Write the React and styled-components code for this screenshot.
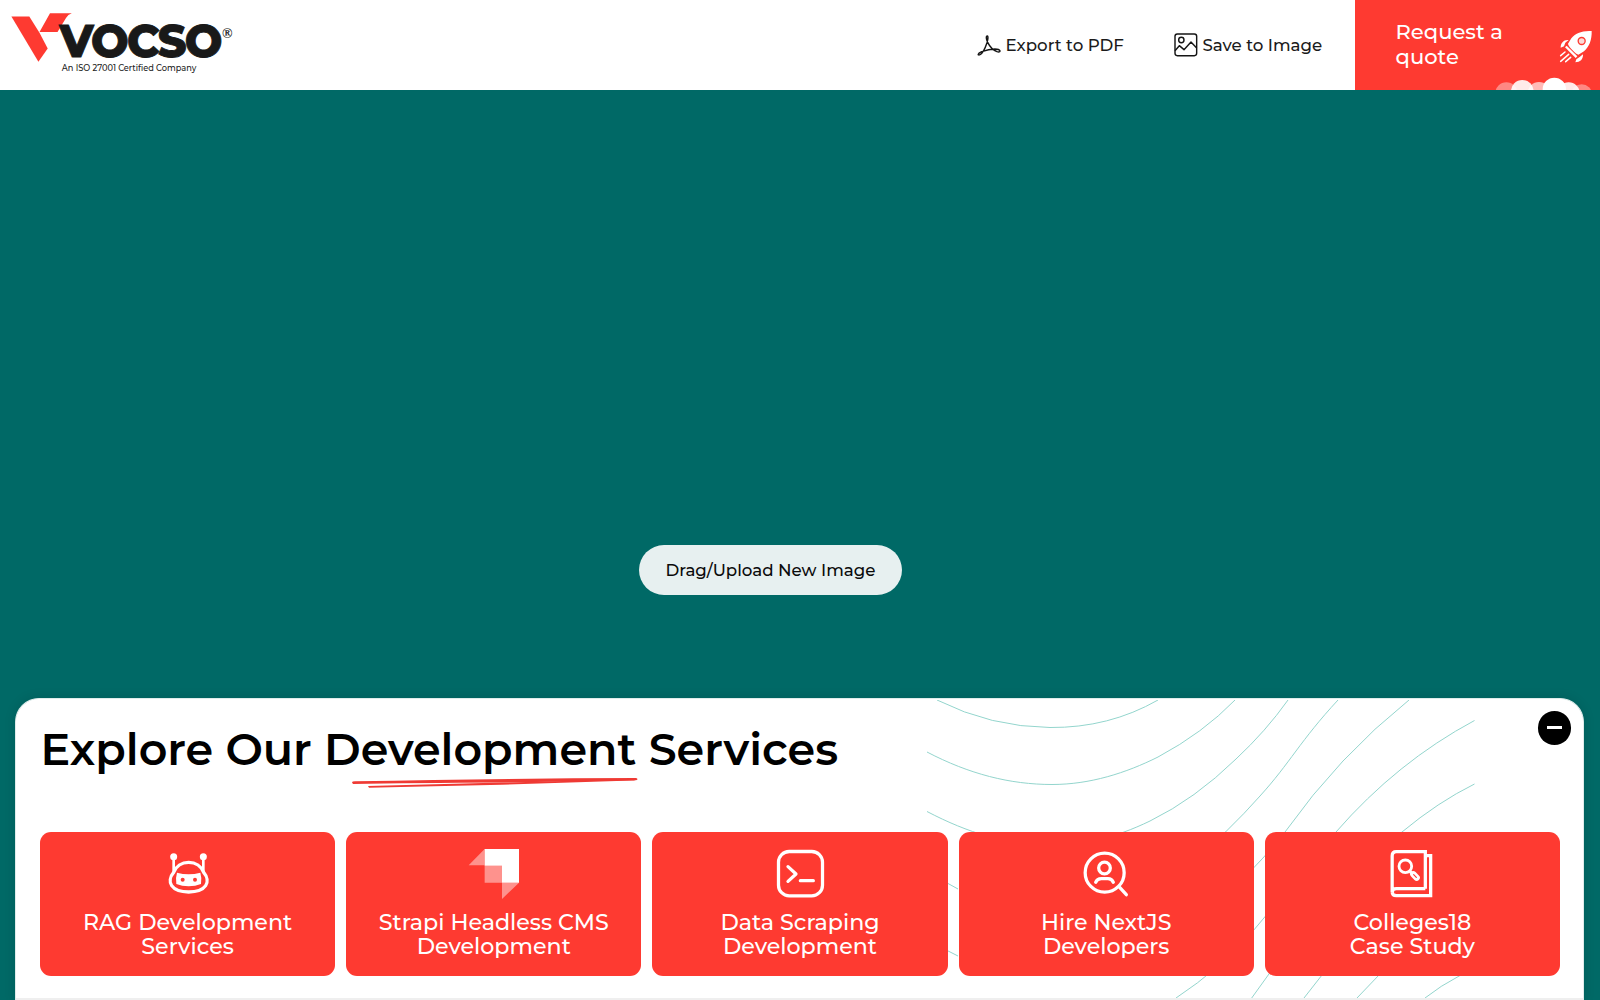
import React from 'react';
import styled, { createGlobalStyle } from 'styled-components';

const RED = '#fe3a31';
const TEAL = '#006966';

const GlobalStyle = createGlobalStyle`
  * { box-sizing: border-box; }
  body {
    margin: 0;
    overflow: hidden;
    background: ${TEAL};
    font-family: Montserrat, Inter, "Liberation Sans", sans-serif;
  }
`;

const Page = styled.div`
  width: 1600px;
  height: 1000px;
  overflow: hidden;
  display: flex;
  flex-direction: column;
  background: ${TEAL};
`;

const Header = styled.header`
  height: 90px;
  flex: none;
  display: flex;
  align-items: stretch;
  background: #fff;
`;

const Logo = styled.svg`
  width: 250px;
  height: 90px;
  display: block;
`;

const Actions = styled.nav`
  margin-left: auto;
  margin-right: 33px;
  display: flex;
  align-items: center;
  gap: 50px;
`;

const Action = styled.a`
  display: flex;
  align-items: center;
  gap: 4.5px;
  font-size: 16.65px;
  font-weight: 500;
  white-space: nowrap;
  color: #1b1b1b;
`;

const ActionIcon = styled.svg`
  width: 24px;
  height: 24px;
  fill: none;
  stroke: #151515;
  stroke-width: 4.3;
  stroke-linejoin: round;
`;

const Quote = styled.a`
  position: relative;
  width: 244.8px;
  padding: 0 0 1.4px 40.3px;
  display: flex;
  flex-direction: column;
  justify-content: center;
  background: ${RED};
  color: #fff;
  font-size: 21.1px;
  font-weight: 500;
  line-height: 25.6px;
`;

const QuoteArt = styled.svg`
  position: absolute;
  right: 0;
  bottom: 0;
  width: 110px;
  height: 70px;
`;

const Line = styled.span`
  display: block;
  white-space: nowrap;
`;

const Stage = styled.main`
  flex: 1;
  display: flex;
  align-items: flex-end;
  justify-content: center;
  padding: 0 59px 102.6px 0;
`;

const UploadButton = styled.button`
  width: 263px;
  height: 50.2px;
  padding: 0;
  border: 0;
  border-radius: 26px;
  background: #e7f0f0;
  color: #0b0b0b;
  font: 500 16.65px Montserrat, Inter, "Liberation Sans", sans-serif;
`;

const Panel = styled.section`
  position: relative;
  flex: none;
  height: 302px;
  margin: 0 16px 0 15px;
  padding: 25px 23px 0 24px;
  border: 1px solid #dfeceb;
  border-bottom: 0;
  border-radius: 24px 24px 0 0;
  background: #fff;
  box-shadow: 0 0 12px rgba(0, 0, 0, 0.12);
  display: flex;
  flex-direction: column;
  overflow: hidden;
`;

const Waves = styled.svg`
  position: absolute;
  left: 911px;
  top: 1px;
  width: 548px;
  height: 299px;
  fill: none;
  stroke: #93d5cd;
  stroke-width: 1;
`;

const Title = styled.h1`
  position: relative;
  margin: 0 0 0 0.5px;
  height: 50px;
  font-size: 44.45px;
  font-weight: 600;
  line-height: 50px;
  color: #000;
  white-space: nowrap;
`;

const Underlined = styled.span`
  position: relative;
  display: inline-block;
`;

const Scribble = styled.svg`
  position: absolute;
  left: 27.5px;
  bottom: -14px;
  width: 286px;
  height: 10px;
  overflow: visible;
  fill: #ef3a34;
`;

const Collapse = styled.button`
  position: absolute;
  top: 12px;
  right: 12px;
  width: 33.5px;
  height: 33.5px;
  padding: 0;
  border: 0;
  border-radius: 50%;
  background: #000;
  display: flex;
  align-items: center;
  justify-content: center;
`;

const Dash = styled.span`
  width: 15.5px;
  height: 2.6px;
  background: #fff;
`;

const Cards = styled.div`
  position: relative;
  margin-top: 58.3px;
  display: grid;
  grid-template-columns: repeat(5, 1fr);
  gap: 11px;
`;

const Card = styled.a`
  height: 143.3px;
  padding-top: 12.7px;
  display: flex;
  flex-direction: column;
  align-items: center;
  border-radius: 11px;
  background: ${RED};
  color: #fff;
`;

const CardIcon = styled.svg`
  width: 60px;
  height: 55px;
  margin-bottom: 10.8px;
  fill: none;
  stroke: #fff;
  stroke-width: 9.8;
`;

const CardLine = styled(Line)`
  font-size: 22.2px;
  font-weight: 500;
  line-height: 24.6px;
`;

const Strip = styled.div`
  position: absolute;
  left: 0;
  right: 0;
  bottom: 0;
  height: 2px;
  background: #efefef;
`;

const icons = {
  robot: (
    <g transform="translate(7 0)">
      <g fill="#fff" stroke="none">
        <circle cx="40" cy="35" r="10.500" />
        <circle cx="129" cy="35" r="10.500" />
        <path d="M50 83Q85 92 120 83Q125 99 122 117Q105 124 85 124Q65 124 48 117Q45 99 50 83Z" />
      </g>
      <path d="M40 40V80M129 40V80" strokeWidth="8" />
      <path d="M85 52C64 52 47 64 40 82C28 96 27 112 34 122C43 135 64 141 85 141S127 135 136 122C143 112 142 96 130 82C123 64 106 52 85 52Z" />
      <circle cx="67" cy="104" r="6" fill={RED} stroke="none" />
      <circle cx="104" cy="104" r="6" fill={RED} stroke="none" />
    </g>
  ),
  strapi: (
    <g fill="#fff" stroke="none">
      <path d="M62 12H165V113H114V62H62Z" />
      <path d="M62 12V61H14ZM62 62H114V113H62ZM114 113H165L114 162Z" opacity="0.45" />
    </g>
  ),
  terminal: (
    <g strokeLinecap="round" strokeLinejoin="round">
      <rect x="25.500" y="19.500" width="132" height="133" rx="32" />
      <path d="M54 65L78 87L54 109M91 107H130" />
    </g>
  ),
  hire: (
    <g strokeLinecap="round">
      <circle cx="86" cy="83" r="58.500" />
      <circle cx="85.500" cy="69" r="17.500" />
      <path d="M59 112Q63 101 76 101H96Q108 101 112 112" />
      <path d="M131 127L151 149" />
    </g>
  ),
  book: (
    <g transform="translate(-7 0)">
      <path d="M137 131V20H50Q37.500 20 37.500 33V140Q37.500 152 50 152H153V32H138M37.500 142Q38 131 50 131H137" />
      <circle cx="77" cy="64" r="19" strokeWidth="8.500" />
      <path d="M91 79L97 85" />
      <path d="M101 88L111 98" strokeWidth="19" strokeLinecap="round" />
      <path d="M102 89L110 97" stroke={RED} strokeWidth="3.500" strokeLinecap="round" />
    </g>
  ),
};

const services = [
  { icon: 'robot', lines: ['RAG Development', 'Services'] },
  { icon: 'strapi', lines: ['Strapi Headless CMS', 'Development'] },
  { icon: 'terminal', lines: ['Data Scraping', 'Development'] },
  { icon: 'hire', lines: ['Hire NextJS', 'Developers'] },
  { icon: 'book', lines: ['Colleges18', 'Case Study'] },
];

const waves = [
  'M937 700Q991 727 1050 727.500T1158 700',
  'M927 752C969 774 1010 784.500 1052 784.500C1090 784.500 1126 773 1158 757Q1203 733 1235 700',
  'M927 811.500C1010 855 1080 855 1150 821Q1195 799 1236 759Q1266 731 1288 700',
  'M927 870Q940 880 958 889',
  'M927 938Q940 948 958 956',
  'M1176 998Q1220 969 1253 931Q1300 875 1336 832Q1397 762 1474.500 720.500',
  'M1180 874Q1231 829 1260 796C1290 763 1300 741 1338 700',
  'M1190 925Q1229 897 1253 868.500Q1272 849 1285 832Q1339 756 1409 700',
  'M1251.700 998Q1330 886 1402 832Q1438 802 1474.500 784',
  'M1304 998L1322 975Q1350 940 1380 910',
  'M1357 998L1379 975Q1410 945 1440 925',
  'M1425 998Q1440 986 1460 975.500',
];

export default function App() {
  return (
    <Page>
      <GlobalStyle />
      <Header>
        <Logo viewBox="0 0 250 90" role="img" aria-label="VOCSO">
          <path d="M11.400 16.500H29.300L39.500 32.700L47.700 48.500L38.400 61.800Z" fill={RED} />
          <path d="M50 13.300H71.800Q68 14.500 66 18L57.500 32H39.500Z" fill={RED} />
          <text x="59.500" y="56.700" fontSize="44.500" fontWeight="800" fill="#191919" stroke="#191919" strokeWidth="0.900" textLength="163" lengthAdjust="spacing">VOCSO</text>
          <text x="222" y="38" fontSize="14" fontWeight="700" fontFamily="Liberation Serif, serif" fill="#191919">®</text>
          <text x="61.800" y="70.700" fontSize="8.600" fontWeight="500" fill="#222" textLength="134.500" lengthAdjust="spacingAndGlyphs">An ISO 27001 Certified Company</text>
        </Logo>
        <Actions>
          <Action>
            <ActionIcon viewBox="18 15 72 72">
              <path d="M49 24C44 24 46 35 50 43C56 55 66 66 78 71C90 75 90 65 78 63.500C60 62 46 66 32 71C18 77 20 83 27 80C36 75 44 56 48 44C51 34 52 24 49 24Z" />
            </ActionIcon>
            Export to PDF
          </Action>
          <Action>
            <ActionIcon viewBox="0 0 72 72">
              <rect x="3" y="3" width="65" height="65" rx="7" />
              <circle cx="22" cy="21" r="8" />
              <path d="M3 53L16 38L30 50L51 27L68 45" />
            </ActionIcon>
            Save to Image
          </Action>
        </Actions>
        <Quote>
          <Line>Request a</Line>
          <Line>quote</Line>
          <QuoteArt viewBox="0 0 330 210">
            <g fill="#fff">
              <path d="M305 33C276 31 256 40 244 55L234 71Q234 76 247 90T265 104L282 94C297 81 306 60 305 33Z" />
              <path d="M230 77L262 109L257 114L225 82Z" />
              <path d="M236 60C222 58 212 68 212 83L222 79L226 68Z" />
              <path d="M279 103C280 118 270 127 256 127L259 118L269 111Z" />
            </g>
            <circle cx="275" cy="63" r="10.500" fill="#fbd9d6" stroke={RED} strokeWidth="4" />
            <path d="M212 107L225 96M212 124L236 103M227 125L242 112" stroke="#fff" strokeWidth="4.500" strokeLinecap="round" />
            <g fill="#fff">
              <circle cx="49" cy="220" r="33" opacity="0.4" />
              <circle cx="147" cy="220" r="34" opacity="0.65" />
              <circle cx="275" cy="224" r="31" opacity="0.4" />
              <circle cx="97" cy="214" r="34" opacity="0.9" />
              <circle cx="236" cy="220" r="33" opacity="0.9" />
              <circle cx="193" cy="208" r="35" />
            </g>
          </QuoteArt>
        </Quote>
      </Header>
      <Stage>
        <UploadButton>Drag/Upload New Image</UploadButton>
      </Stage>
      <Panel>
        <Waves viewBox="927 700 548 299">
          {waves.map((d) => (
            <path key={d} d={d} />
          ))}
        </Waves>
        <Title>
          Explore Our{' '}
          <Underlined>
            Development
            <Scribble viewBox="0 0 286 10">
              <path d="M0 4.500Q0 3.400 3 3.300Q150 0.500 284 0Q287 1.200 284 2.200L150 4.600Q60 5 1 6Z" />
              <path d="M16 8L150 4.600L284 1Q286 2 280 2.600L150 6.700Q80 8 17 9.800Z" />
            </Scribble>
          </Underlined>{' '}
          Services
        </Title>
        <Collapse aria-label="Collapse">
          <Dash />
        </Collapse>
        <Cards>
          {services.map((s) => (
            <Card key={s.icon}>
              <CardIcon viewBox="0 0 180 165">{icons[s.icon]}</CardIcon>
              {s.lines.map((text) => (
                <CardLine key={text}>{text}</CardLine>
              ))}
            </Card>
          ))}
        </Cards>
        <Strip />
      </Panel>
    </Page>
  );
}
